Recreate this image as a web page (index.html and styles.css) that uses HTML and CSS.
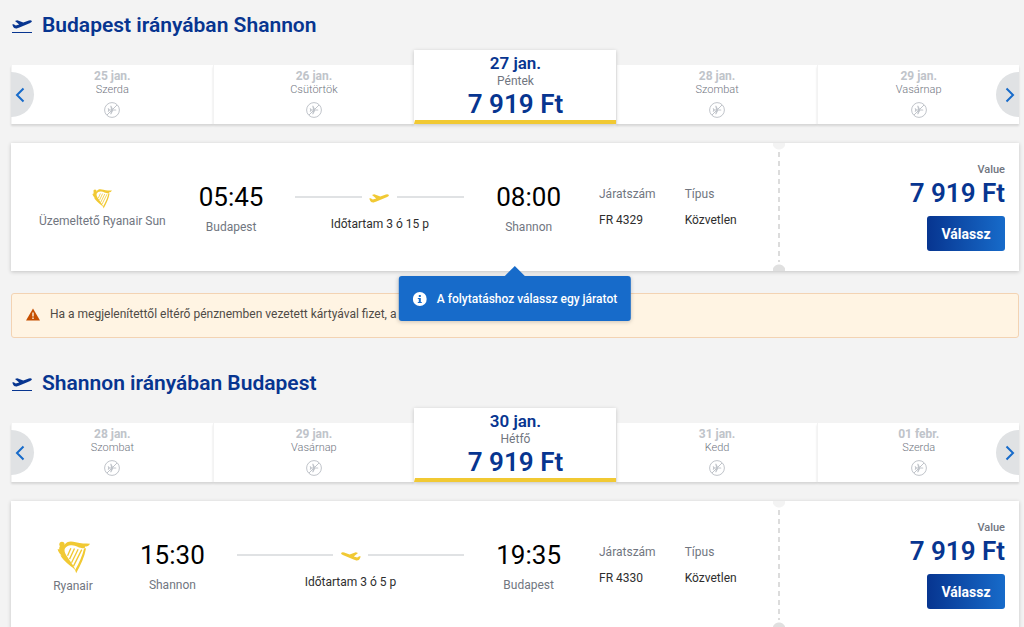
FILE: index.html
```html
<!DOCTYPE html>
<html lang="hu">
<head>
  <meta charset="UTF-8">
  <meta name="viewport" content="width=device-width, initial-scale=1.0">
  <title>Budapest - Shannon járatok</title>
  <link rel="stylesheet" href="styles.css">
</head>
<body>
  <!-- Shared icons -->
  <svg class="sprite" aria-hidden="true">
    <symbol id="takeoff" viewBox="0 0 21 16">
      <path transform="translate(1 3)" d="M.2 4.600L1.700 4.200 3.800 5.600 7.200 4.400 3 1 5.200.3 11.300 2.600 15.500.9C17 .3 19.300 0 19.800 1c.4.9-.8 1.700-2.200 2.300L8 7.200C6 8 4.500 8.800 2.800 8.300 1.500 7.900.8 6 .2 4.600z"/>
      <path d="M1 15h20v1H1z"/>
    </symbol>
    <symbol id="plane" viewBox="0 0 21 15">
      <path transform="translate(0 5)" d="M.2 4.600L1.700 4.200 3.800 5.600 7.200 4.400 3 1 5.200.3 11.300 2.600 15.500.9C17 .3 19.300 0 19.800 1c.4.9-.8 1.700-2.200 2.300L8 7.200C6 8 4.500 8.800 2.800 8.300 1.500 7.900.8 6 .2 4.600z"/>
    </symbol>
    <symbol id="no-flight" viewBox="0 0 16 16">
      <circle cx="8" cy="8" r="7.400" fill="none" stroke="currentColor"/>
      <path d="M3.700 6.200h.9l1 1.200H7.100L6.200 3.800h1.100L9.200 7.400h2.300c1.200 0 1.200 1.200 0 1.200H9.200L7.300 12.200H6.200L7.100 8.600H5.600l-1 1.200h-.9L4.200 8z"/>
      <path d="M13 3L3 13" fill="none" stroke="currentColor"/>
    </symbol>
    <symbol id="harp" viewBox="0 0 100 100">
      <circle cx="15" cy="10" r="8"/>
      <path d="M22 12C30 0 42-1 57 4c16 5 29 3 43 4-4 7-9 9-15 9l-1 5c-17 1-25-8-39-9-10-1-17 3-21 10-3 6 0 15 7 25 8 13 19 26 26 42C45 77 28 68 15 51L10 43l4 1C7 37 3 31 2 24l5 2c-1-7 1-12 8-12z"/>
      <path d="M82 23l6-1C84 47 72 72 58 98l-3-10C68 66 77 44 82 23z"/>
      <path d="M42 22L32 45M53 23L38 55M64 25L44 66M75 26L50 76" fill="none" stroke="currentColor" stroke-width="4"/>
    </symbol>
    <symbol id="chevron" viewBox="0 0 10 16">
      <path d="M8.500 1.500L2 8l6.500 6.500" fill="none" stroke="currentColor" stroke-width="2"/>
    </symbol>
  </svg>

  <main class="flights">
    <section class="journey">
      <h2 class="journey-title"><svg class="title-icon"><use href="#takeoff"/></svg>Budapest irányában Shannon</h2>

      <div class="carousel">
        <button class="arrow arrow-prev" aria-label="Előző"><svg><use href="#chevron"/></svg></button>
        <button class="day" disabled>
          <span class="date">25 jan.</span>
          <span class="weekday">Szerda</span>
          <svg class="no-flight"><use href="#no-flight"/></svg>
        </button>
        <button class="day" disabled>
          <span class="date">26 jan.</span>
          <span class="weekday">Csütörtök</span>
          <svg class="no-flight"><use href="#no-flight"/></svg>
        </button>
        <button class="day selected">
          <span class="date">27 jan.</span>
          <span class="weekday">Péntek</span>
          <span class="price">7 919 Ft</span>
        </button>
        <button class="day" disabled>
          <span class="date">28 jan.</span>
          <span class="weekday">Szombat</span>
          <svg class="no-flight"><use href="#no-flight"/></svg>
        </button>
        <button class="day" disabled>
          <span class="date">29 jan.</span>
          <span class="weekday">Vasárnap</span>
          <svg class="no-flight"><use href="#no-flight"/></svg>
        </button>
        <button class="arrow arrow-next" aria-label="Következő"><svg><use href="#chevron"/></svg></button>
      </div>

      <div class="card">
        <div class="info">
          <div class="airline">
            <svg class="harp harp-small"><use href="#harp"/></svg>
            <span>Üzemeltető Ryanair Sun</span>
          </div>
          <div class="stop">
            <span class="time">05:45</span>
            <span class="city">Budapest</span>
          </div>
          <div class="route">
            <div class="line"><svg><use href="#plane"/></svg></div>
            <span class="duration">Időtartam 3 ó 15 p</span>
          </div>
          <div class="stop">
            <span class="time">08:00</span>
            <span class="city">Shannon</span>
          </div>
          <dl class="details">
            <div><dt>Járatszám</dt><dd>FR 4329</dd></div>
            <div><dt>Típus</dt><dd>Közvetlen</dd></div>
          </dl>
        </div>
        <div class="fare">
          <span class="fare-name">Value</span>
          <span class="price">7 919 Ft</span>
          <button class="select">Válassz</button>
        </div>
        <div class="tooltip" role="tooltip">
          <svg viewBox="0 0 14 14"><circle cx="7" cy="7" r="7" fill="#fff"/><path d="M6 3h2v2H6zM5 6h3v4h1v1H5v-1h1V7H5z" fill="#176bca"/></svg>
          A folytatáshoz válassz egy járatot
        </div>
      </div>

      <div class="warning">
        <svg viewBox="0 0 14 13"><path d="M7 .5L14 12.500H0z" fill="#c64f00"/><path d="M6.300 4.500h1.400v4H6.300zM6.300 9.500h1.400V11H6.300z" fill="#fff4e3"/></svg>
        <p>Ha a megjelenítettől eltérő pénznemben vezetett kártyával fizet, a bank díjat számíthat fel.</p>
      </div>
    </section>

    <section class="journey">
      <h2 class="journey-title"><svg class="title-icon"><use href="#takeoff"/></svg>Shannon irányában Budapest</h2>

      <div class="carousel">
        <button class="arrow arrow-prev" aria-label="Előző"><svg><use href="#chevron"/></svg></button>
        <button class="day" disabled>
          <span class="date">28 jan.</span>
          <span class="weekday">Szombat</span>
          <svg class="no-flight"><use href="#no-flight"/></svg>
        </button>
        <button class="day" disabled>
          <span class="date">29 jan.</span>
          <span class="weekday">Vasárnap</span>
          <svg class="no-flight"><use href="#no-flight"/></svg>
        </button>
        <button class="day selected">
          <span class="date">30 jan.</span>
          <span class="weekday">Hétfő</span>
          <span class="price">7 919 Ft</span>
        </button>
        <button class="day" disabled>
          <span class="date">31 jan.</span>
          <span class="weekday">Kedd</span>
          <svg class="no-flight"><use href="#no-flight"/></svg>
        </button>
        <button class="day" disabled>
          <span class="date">01 febr.</span>
          <span class="weekday">Szerda</span>
          <svg class="no-flight"><use href="#no-flight"/></svg>
        </button>
        <button class="arrow arrow-next" aria-label="Következő"><svg><use href="#chevron"/></svg></button>
      </div>

      <div class="card">
        <div class="info">
          <div class="airline">
            <svg class="harp"><use href="#harp"/></svg>
            <span>Ryanair</span>
          </div>
          <div class="stop">
            <span class="time">15:30</span>
            <span class="city">Shannon</span>
          </div>
          <div class="route">
            <div class="line inbound"><svg><use href="#plane"/></svg></div>
            <span class="duration">Időtartam 3 ó 5 p</span>
          </div>
          <div class="stop">
            <span class="time">19:35</span>
            <span class="city">Budapest</span>
          </div>
          <dl class="details">
            <div><dt>Járatszám</dt><dd>FR 4330</dd></div>
            <div><dt>Típus</dt><dd>Közvetlen</dd></div>
          </dl>
        </div>
        <div class="fare">
          <span class="fare-name">Value</span>
          <span class="price">7 919 Ft</span>
          <button class="select">Válassz</button>
        </div>
      </div>
    </section>
  </main>
</body>
</html>
```
FILE: styles.css
```css
* { margin: 0; padding: 0; box-sizing: border-box; }

body {
  font-family: Roboto, "Liberation Sans", sans-serif;
  font-size: 12px;
  line-height: 16px;
  color: #2e2e2e;
  background: #f3f3f3;
  overflow-x: hidden;
}

button { font: inherit; border: 0; cursor: pointer; }
svg { display: block; flex-shrink: 0; fill: currentColor; }

.sprite { position: absolute; width: 0; height: 0; }

.flights { padding: 10px 5px 0 11px; }

/* Section heading */
.journey + .journey { margin-top: 30px; }
.journey-title {
  display: flex;
  align-items: center;
  gap: 10px;
  font-size: 21px;
  line-height: 30px;
  font-weight: 600;
  color: #073590;
}
.title-icon { width: 21px; height: 16px; }

/* Day carousel */
.carousel {
  position: relative;
  display: flex;
  align-items: flex-end;
  margin: 10px 0 19px;
}
.day {
  flex: 1;
  display: flex;
  flex-direction: column;
  align-items: center;
  height: 59px;
  padding-top: 4px;
  color: #71767f;
  background: #fff;
  border-left: 1px solid #f3f3f3;
  box-shadow: 0 2px 2px rgba(0,0,0,0.12);
  cursor: default;
}
.day .date {
  font-size: 12px;
  line-height: 14px;
  font-weight: 700;
  color: #c0c4ca;
}
.day .weekday { font-size: 11px; line-height: 13px; font-weight: 300; }
.no-flight { width: 16px; height: 16px; margin-top: 6px; color: #c0c4ca; }

.day.selected {
  position: relative;
  height: 74px;
  padding-top: 3px;
  border-left-color: #fff;
  border-bottom: 4px solid #f1c933;
  box-shadow: 0 1px 4px rgba(0,0,0,0.2);
  cursor: pointer;
}
.day.selected .date {
  font-size: 17px;
  line-height: 20px;
  font-weight: 600;
  color: #073590;
}
.day.selected .weekday { font-size: 12px; line-height: 16px; font-weight: 400; }

.price {
  font-size: 26px;
  line-height: 30px;
  font-weight: 600;
  color: #073590;
}

.arrow {
  position: absolute;
  z-index: 1;
  bottom: 7px;
  display: flex;
  align-items: center;
  width: 23px;
  height: 45px;
  padding: 0 4px;
  color: #176bca;
  background: #e0e2e4;
}
.arrow svg { width: 10px; height: 16px; }
.arrow-prev { left: 0; border-radius: 0 23px 23px 0; }
.arrow-next { right: 0; border-radius: 23px 0 0 23px; justify-content: flex-end; }
.arrow-next svg { transform: scaleX(-1); }

/* Flight card */
.card {
  position: relative;
  display: flex;
  height: 128px;
  background: #fff;
  box-shadow: 0 1px 4px rgba(0,0,0,0.2);
}
.info {
  flex: 1;
  display: flex;
  align-items: flex-start;
  padding: 36px 0 32px 28px;
}
.airline {
  display: flex;
  flex-direction: column;
  align-items: center;
  align-self: center;
  min-width: 68px;
  gap: 4px;
  margin-right: 33px;
  color: #71767f;
}
.harp { width: 33px; height: 33px; color: #f1c933; }
.harp-small { width: 20px; height: 20px; }

.stop {
  display: flex;
  flex-direction: column;
  align-items: center;
  gap: 4px;
}
.time { font-size: 26px; line-height: 36px; color: #000; }
.city { color: #71767f; }

.route {
  flex: 1;
  display: flex;
  flex-direction: column;
  align-items: center;
  gap: 12px;
  margin: 10px 32px 0;
}
.line {
  display: flex;
  align-items: center;
  gap: 7px;
  width: 100%;
}
.line::before, .line::after {
  content: "";
  flex: 1;
  height: 2px;
  background: #e0e2e4;
}
.line svg { width: 21px; height: 15px; color: #f1c933; }
.inbound svg { transform: scaleX(-1); }

.details {
  display: flex;
  gap: 29px;
  width: 174px;
  margin: 7px 0 0 38px;
}
.details dt { color: #71767f; }
.details dd { margin-top: 10px; }

.fare {
  position: relative;
  display: flex;
  flex-direction: column;
  align-items: flex-end;
  width: 246px;
  padding: 19px 14px 0 0;
}
/* Perforation between the flight and the fare */
.fare::before {
  content: "";
  position: absolute;
  left: 0;
  top: 0;
  bottom: 0;
  width: 12px;
  background:
    radial-gradient(circle at 50% 0, #f3f3f3 6px, transparent 7px),
    radial-gradient(circle at 50% 100%, #e0e0e0 6px, transparent 7px),
    repeating-linear-gradient(#dcdcdc 0 5px, transparent 5px 9px) center / 2px 110px no-repeat;
}
.fare-name { font-size: 11px; font-weight: 500; color: #71767f; }
.select {
  width: 78px;
  height: 35px;
  margin-top: 8px;
  font-size: 14px;
  font-weight: 700;
  color: #fff;
  background: linear-gradient(90deg, #073590, #176bca);
  border-radius: 3px;
}

.tooltip {
  position: absolute;
  z-index: 2;
  left: 50%;
  top: calc(100% + 5px);
  transform: translateX(-50%);
  display: flex;
  align-items: center;
  gap: 10px;
  height: 45px;
  padding: 0 14px;
  font-weight: 500;
  white-space: nowrap;
  color: #fff;
  background: #176bca;
  border-radius: 3px;
  box-shadow: 0 1px 4px rgba(0,0,0,0.2);
}
.tooltip svg { width: 14px; height: 14px; }
.tooltip::before {
  content: "";
  position: absolute;
  left: 50%;
  bottom: 100%;
  margin-left: -10px;
  border: 10px solid transparent;
  border-top: 0;
  border-bottom-color: #176bca;
}

.warning {
  display: flex;
  align-items: center;
  gap: 10px;
  height: 45px;
  margin-top: 22px;
  padding: 0 14px 3px;
  color: #4f4b46;
  background: #fff4e3;
  border: 1px solid #f3d3b3;
  border-radius: 3px;
}
.warning svg { width: 14px; height: 13px; }
```
